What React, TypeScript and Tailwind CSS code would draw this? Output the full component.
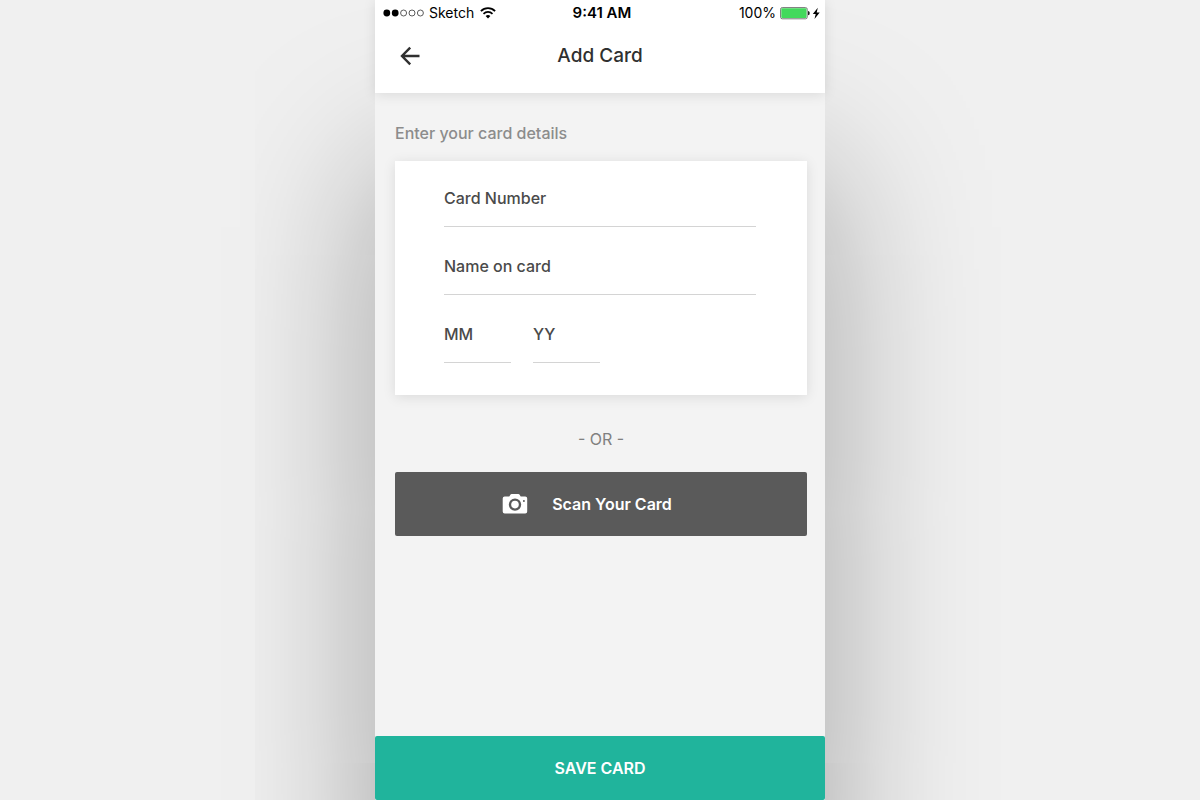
import type { InputHTMLAttributes } from 'react';

function SignalDots() {
  return (
    <svg width="42" height="10" viewBox="0 0 42 10" aria-hidden="true">
      <circle cx="3.8" cy="5" r="3.4" />
      <circle cx="12.2" cy="5" r="3.4" />
      <g fill="none" stroke="#333" strokeWidth="0.8">
        <circle cx="20.6" cy="5" r="3" />
        <circle cx="29" cy="5" r="3" />
        <circle cx="37.4" cy="5" r="3" />
      </g>
    </svg>
  );
}

function WifiIcon() {
  return (
    <svg width="16" height="12" viewBox="0 0 16 12" fill="none" stroke="black" aria-hidden="true">
      <path d="M0.9 4.1a10.1 10.1 0 0 1 14.2 0" strokeWidth="1.8" />
      <path d="M3.5 6.8a6.4 6.4 0 0 1 9 0" strokeWidth="1.7" />
      <path d="M8 11.6 5.6 9.1a3.4 3.4 0 0 1 4.8 0z" fill="black" stroke="none" />
    </svg>
  );
}

function BatteryIcon() {
  return (
    <svg width="41" height="13" viewBox="0 0 41 13" aria-hidden="true">
      <rect x="0.6" y="0.6" width="26.6" height="11.2" rx="1.6" fill="white" stroke="#777" strokeWidth="1" />
      <rect x="1.3" y="1.3" width="25.2" height="9.8" rx="0.8" fill="#43d95c" />
      <path d="M28 4.1c1.2.2 1.7 1 1.7 2.1s-.5 1.9-1.7 2.1z" fill="#222" />
      <path d="M37.8.7 32.8 7h2.900l-1.200 5 5.200-6.600h-3z" />
    </svg>
  );
}

function CameraIcon() {
  return (
    <svg width="26" height="22" viewBox="0 0 26 22" fill="white" aria-hidden="true">
      <path
        fillRule="evenodd"
        d="M7.3 3.600 8.200 1.900Q8.700 1 9.700 1h6.600q1 0 1.500.9l.9 1.700h4.500q2 0 2 2v13q0 2-2 2h-20.500q-2 0-2-2v-13q0-2 2-2zM13 5.400a6.200 6.200 0 1 0 0 12.400 6.200 6.200 0 0 0 0-12.400zM21.900 6.900a1 1 0 1 0 0 2 1 1 0 0 0 0-2z"
      />
      <circle cx="13" cy="11.6" r="3.8" />
    </svg>
  );
}

function Field({ label, ...props }: { label: string } & InputHTMLAttributes<HTMLInputElement>) {
  return (
    <input
      type="text"
      aria-label={label}
      placeholder={label}
      className="h-14 w-full min-w-0 border-b border-[#d4d4d4] bg-transparent pb-0.5 text-base font-medium text-[#4a4a4a] outline-none placeholder:text-[#4a4a4a]"
      {...props}
    />
  );
}

export default function App() {
  return (
    <div className="flex min-h-screen justify-center overflow-hidden bg-[#f0f0f0] font-['Inter',sans-serif]">
      <div className="flex w-full max-w-[450px] flex-col bg-[#f3f3f3] shadow-[0_170px_160px_rgba(0,0,0,0.35)]">
        <header className="bg-white shadow-[0_2px_12px_rgba(0,0,0,0.1)]">
          <div className="grid h-[26px] grid-cols-3 items-center pr-1 pl-2 text-sm text-black">
            <div className="flex items-center gap-1">
              <SignalDots />
              <span className="pr-0.5">Sketch</span>
              <WifiIcon />
            </div>
            <span className="text-center text-[15px] font-semibold">9:41 AM</span>
            <div className="flex items-center justify-end gap-1">
              <span>100%</span>
              <BatteryIcon />
            </div>
          </div>
          <div className="grid h-[67px] grid-cols-[1fr_auto_1fr] items-start px-6 pt-4">
            <button type="button" aria-label="Back" className="h-7 w-7">
              <svg width="22" height="28" viewBox="0 0 22 28" fill="none" stroke="#303030" strokeWidth="2.4" aria-hidden="true">
                <path d="M20.5 14H3M11.200 5.600 3 14l8.200 8.400" />
              </svg>
            </button>
            <h1 className="text-[19px] leading-7 font-medium text-[#303030]">Add Card</h1>
          </div>
        </header>

        <main className="flex-1 pt-7 pr-[18px] pb-8 pl-5">
          <h2 className="text-base font-medium text-[#8c8c8c]">Enter your card details</h2>

          <form className="mt-4 flex flex-col gap-3 bg-white pt-2.5 pr-[51px] pb-8 pl-[49px] shadow-[0_2px_12px_rgba(0,0,0,0.1)]">
            <Field label="Card Number" inputMode="numeric" />
            <Field label="Name on card" />
            <div className="flex gap-[22px]">
              <div className="w-[67px]">
                <Field label="MM" maxLength={2} />
              </div>
              <div className="w-[67px]">
                <Field label="YY" maxLength={2} />
              </div>
            </div>
          </form>

          <p className="pt-8 pb-[21px] text-center text-base text-[#808080]">- OR -</p>

          <button
            type="button"
            className="flex h-16 w-full items-center justify-center gap-6 rounded-xs bg-[#5a5a5a] pr-7 text-base font-semibold text-white"
          >
            <CameraIcon />
            Scan Your Card
          </button>
        </main>

        <button type="button" className="h-16 w-full rounded-xs bg-[#20b49c] text-base font-semibold text-white">
          SAVE CARD
        </button>
      </div>
    </div>
  );
}
